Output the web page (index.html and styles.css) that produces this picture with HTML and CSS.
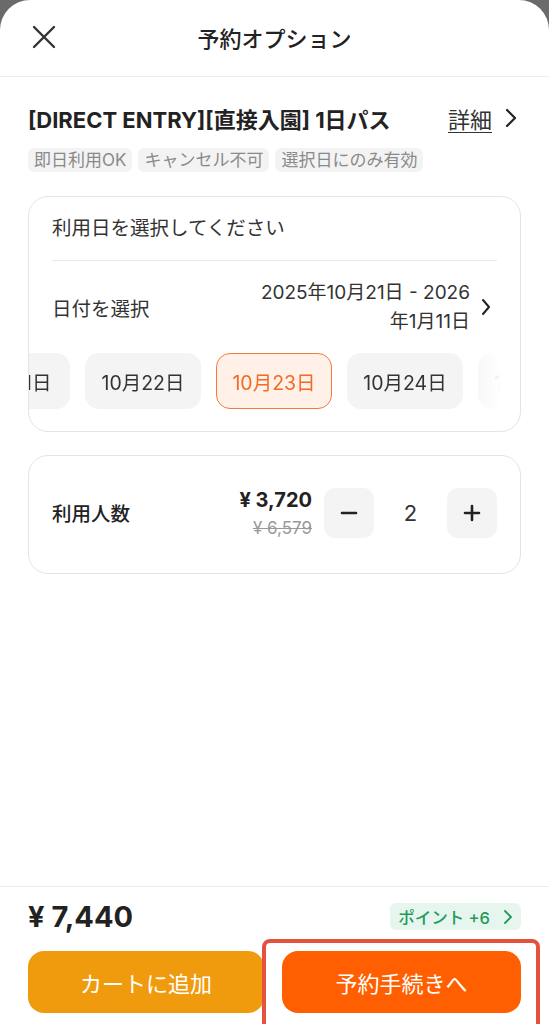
FILE: index.html
```html
<!DOCTYPE html>
<html lang="ja">
<head>
    <meta charset="UTF-8">
    <meta name="viewport" content="width=device-width, initial-scale=1.0">
    <title>予約オプション</title>
    <link rel="stylesheet" href="styles.css">
</head>
<body>
    <div class="sheet">
        <header class="sheet-header">
            <button class="close-btn" aria-label="閉じる">
                <svg width="26" height="26" viewBox="0 0 26 26"><path d="M3 3 L23 23 M23 3 L3 23" stroke="#333" stroke-width="2.4" stroke-linecap="round"/></svg>
            </button>
            <h1>予約オプション</h1>
            <span></span>
        </header>

        <main class="content">
            <div class="product-row">
                <h2 class="product-title">[DIRECT ENTRY][直接入園] 1日パス</h2>
                <a class="detail-link">詳細</a>
                <svg class="chev" width="12" height="20" viewBox="0 0 12 20"><path d="M2 2 L10 10 L2 18" fill="none" stroke="#222" stroke-width="2.2" stroke-linecap="round" stroke-linejoin="round"/></svg>
            </div>
            <div class="tags">
                <span class="tag">即日利用OK</span>
                <span class="tag">キャンセル不可</span>
                <span class="tag">選択日にのみ有効</span>
            </div>

            <section class="card date-card">
                <p class="card-label">利用日を選択してください</p>
                <div class="divider"></div>
                <div class="date-row">
                    <span>日付を選択</span>
                    <span class="date-range">2025年10月21日 - 2026年1月11日</span>
                    <svg class="date-chev" width="12" height="20" viewBox="0 0 12 20"><path d="M3 3 L9 10 L3 17" fill="none" stroke="#222" stroke-width="2" stroke-linecap="round" stroke-linejoin="round"/></svg>
                </div>
                <div class="chips">
                    <span class="chip first">10月21日</span>
                    <span class="chip">10月22日</span>
                    <span class="chip active">10月23日</span>
                    <span class="chip">10月24日</span>
                    <span class="chip">10月25日</span>
                </div>
            </section>

            <section class="card qty-card">
                <span class="qty-label">利用人数</span>
                <div class="prices">
                    <span class="price-now">¥ 3,720</span>
                    <span class="price-old">¥ 6,579</span>
                </div>
                <div class="stepper">
                    <button class="step-btn" aria-label="減らす">
                        <svg width="18" height="18" viewBox="0 0 18 18"><path d="M2 9 H16" stroke="#222" stroke-width="2.6" stroke-linecap="round"/></svg>
                    </button>
                    <span class="count">2</span>
                    <button class="step-btn" aria-label="増やす">
                        <svg width="18" height="18" viewBox="0 0 18 18"><path d="M2 9 H16 M9 2 V16" stroke="#222" stroke-width="2.6" stroke-linecap="round"/></svg>
                    </button>
                </div>
            </section>
        </main>

        <footer class="footer">
            <div class="total-row">
                <span class="total">¥ 7,440</span>
                <span class="points">ポイント +6
                    <svg width="10" height="16" viewBox="0 0 10 16"><path d="M2 2 L8 8 L2 14" fill="none" stroke="#1f9a5c" stroke-width="1.8" stroke-linecap="round" stroke-linejoin="round"/></svg>
                </span>
            </div>
            <div class="actions">
                <button class="btn btn-cart">カートに追加</button>
                <button class="btn btn-book">予約手続きへ</button>
            </div>
            <div class="highlight"></div>
        </footer>
    </div>
</body>
</html>
```

FILE: styles.css
```css
body {
    margin: 0;
    background: #6a6a6a;
    font-family: "Inter", "Noto Sans CJK JP", sans-serif;
    color: #222;
    overflow: hidden;
}
button {
    font-family: inherit;
    border: none;
    cursor: pointer;
}
.sheet {
    background: #fff;
    border-radius: 30px 30px 0 0;
    height: 1024px;
    display: flex;
    flex-direction: column;
    position: relative;
}

/* header */
.sheet-header {
    display: grid;
    grid-template-columns: 80px 1fr 80px;
    align-items: center;
    height: 76px;
    border-bottom: 1px solid #ececec;
}
.close-btn {
    background: none;
    padding: 0;
    margin: 0 0 2px 31px;
    width: 26px;
    height: 26px;
    display: flex;
}
.sheet-header h1 {
    margin: 0 0 3px;
    text-align: center;
    font-size: 22px;
    font-weight: 500;
    color: #222;
}

/* main */
.content {
    flex: 1;
    padding: 0 28px;
}
.product-row {
    display: flex;
    align-items: center;
    margin-top: 26px;
    height: 30px;
}
.product-title {
    flex: 1;
    margin: 0;
    font-size: 22px;
    font-weight: 700;
    color: #222;
    white-space: nowrap;
}
.detail-link {
    font-size: 22px;
    color: #333;
    text-decoration: underline;
    text-underline-offset: 4px;
    text-decoration-thickness: 1px;
    margin-right: 13px;
}
.chev {
    margin-right: 4px;
}
.tags {
    display: flex;
    gap: 6px;
    margin-top: 15px;
}
.tag {
    background: #f3f3f3;
    color: #8a8a8a;
    font-size: 17px;
    line-height: 24px;
    padding: 0 6px;
    border-radius: 6px;
}

.card {
    border: 1px solid #e4e4e4;
    border-radius: 20px;
    margin-top: 24px;
}
.date-card {
    padding: 18px 23px 22px;
    overflow: hidden;
}
.card-label {
    margin: 0;
    font-size: 19.5px;
    line-height: 26px;
    color: #333;
}
.divider {
    height: 1px;
    background: #e8e8e8;
    margin: 19px 0 17px;
}
.date-row {
    display: flex;
    align-items: center;
    font-size: 19.5px;
    color: #333;
}
.date-row > span:first-child {
    flex: 1;
}
.date-range {
    width: 222px;
    text-align: right;
    font-size: 19px;
    line-height: 29px;
    margin-right: 10px;
}
.date-chev {
    margin-right: 5px;
}
.chips {
    display: flex;
    gap: 15px;
    margin: 17px -23px 0;
    -webkit-mask-image: linear-gradient(to right, #000 89%, transparent 96%);
    mask-image: linear-gradient(to right, #000 89%, transparent 96%);
}
.chip {
    flex: none;
    width: 116px;
    height: 56px;
    box-sizing: border-box;
    border-radius: 14px;
    background: #f4f4f4;
    display: flex;
    align-items: center;
    justify-content: center;
    font-size: 19.5px;
    color: #333;
}
.chip.first {
    margin-left: -75px;
}
.chip.active {
    background: #fff1e7;
    border: 1.5px solid #f07b3c;
    color: #f26a25;
}

.qty-card {
    display: flex;
    align-items: center;
    height: 119px;
    box-sizing: border-box;
    margin-top: 23px;
    padding: 0 23px 4px;
}
.qty-label {
    flex: 1;
    font-size: 19.5px;
    font-weight: 500;
    color: #222;
}
.prices {
    display: flex;
    flex-direction: column;
    align-items: flex-end;
    margin-right: 12px;
    margin-top: 1px;
}
.price-now {
    font-size: 20px;
    font-weight: 700;
    line-height: 26px;
}
.price-old {
    font-size: 17px;
    color: #999;
    text-decoration: line-through;
    line-height: 24px;
    margin-top: 3px;
}
.stepper {
    display: flex;
    align-items: center;
}
.step-btn {
    width: 50px;
    height: 50px;
    border-radius: 11px;
    background: #f4f4f4;
    display: flex;
    align-items: center;
    justify-content: center;
}
.count {
    width: 73px;
    text-align: center;
    font-size: 22px;
    color: #333;
}

/* footer */
.footer {
    border-top: 1px solid #ececec;
    padding: 12px 28px 11px;
    position: relative;
}
.total-row {
    display: flex;
    align-items: center;
    justify-content: space-between;
}
.total {
    font-size: 29px;
    font-weight: 700;
    color: #222;
}
.points {
    display: flex;
    align-items: center;
    gap: 13px;
    background: #e6f6ee;
    color: #1f9a5c;
    font-size: 16.5px;
    font-weight: 500;
    height: 27px;
    padding: 0 8px 0 8px;
    border-radius: 6px;
}
.actions {
    display: flex;
    gap: 18px;
    margin-top: 17px;
}
.btn {
    height: 62px;
    border-radius: 16px;
    color: #fff;
    font-size: 22px;
}
.btn-cart {
    width: 236px;
    background: #f09b0e;
}
.btn-book {
    flex: 1;
    background: #ff5f00;
}
.highlight {
    position: absolute;
    left: 262px;
    top: 52px;
    width: 278px;
    height: 100px;
    box-sizing: border-box;
    border: 4px solid #e4523f;
    border-radius: 8px;
}
```
